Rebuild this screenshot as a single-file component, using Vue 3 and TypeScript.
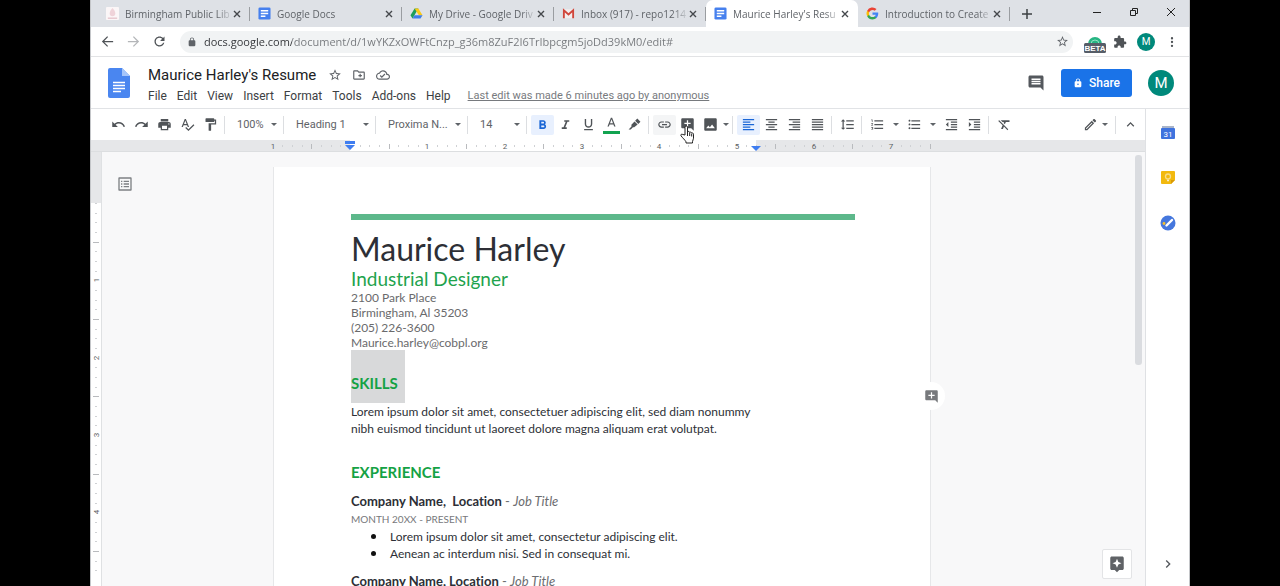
<script setup lang="ts">
import { ref } from 'vue'

interface Tab {
  title: string
  icon: 'library' | 'docs' | 'drive' | 'gmail' | 'google'
  active?: boolean
}

interface Tool {
  name: string
  label: string
  on?: boolean
  hover?: boolean
  caret?: 'tight' | 'wide'
}

interface Tick {
  pos: number
  kind: 'label' | 'half' | 'eighth'
  text: string
}

const tabs: Tab[] = [
  { title: 'Birmingham Public Lib', icon: 'library' },
  { title: 'Google Docs', icon: 'docs' },
  { title: 'My Drive - Google Driv', icon: 'drive' },
  { title: 'Inbox (917) - repo1214', icon: 'gmail' },
  { title: "Maurice Harley's Resu", icon: 'docs', active: true },
  { title: 'Introduction to Create', icon: 'google' },
]

const url = ref('docs.google.com/document/d/1wYKZxOWFtCnzp_g36m8ZuF2I6TrIbpcgm5joDd39kM0/edit#')
const docTitle = ref("Maurice Harley's Resume")
const menus = ['File', 'Edit', 'View', 'Insert', 'Format', 'Tools', 'Add-ons', 'Help']

const selects = [
  { id: 'zoom', label: 'Zoom', value: '100%', size: 'narrow' },
  { id: 'style', label: 'Paragraph style', value: 'Heading 1', size: 'wide' },
  { id: 'font', label: 'Font', value: 'Proxima N...', size: 'wide' },
  { id: 'size', label: 'Font size', value: '14', size: 'narrow' },
]

const historyTools: Tool[] = [
  { name: 'undo', label: 'Undo' },
  { name: 'redo', label: 'Redo' },
  { name: 'print', label: 'Print' },
  { name: 'spell', label: 'Spelling and grammar check' },
  { name: 'paint', label: 'Paint format' },
]

const toolGroups: Tool[][] = [
  [
    { name: 'bold', label: 'Bold', on: true },
    { name: 'italic', label: 'Italic' },
    { name: 'underline', label: 'Underline' },
    { name: 'color', label: 'Text color' },
    { name: 'marker', label: 'Highlight color' },
  ],
  [
    { name: 'link', label: 'Insert link', hover: true },
    { name: 'addComment', label: 'Add comment' },
    { name: 'image', label: 'Insert image', caret: 'tight' },
  ],
  [
    { name: 'left', label: 'Left align', on: true },
    { name: 'center', label: 'Center align' },
    { name: 'right', label: 'Right align' },
    { name: 'justify', label: 'Justify' },
  ],
  [{ name: 'spacing', label: 'Line spacing' }],
  [
    { name: 'numbered', label: 'Numbered list', caret: 'wide' },
    { name: 'bulleted', label: 'Bulleted list', caret: 'wide' },
    { name: 'outdent', label: 'Decrease indent' },
    { name: 'indent', label: 'Increase indent' },
  ],
  [{ name: 'clear', label: 'Clear formatting' }],
]

const icons: Record<string, string> = {
  undo: 'M12.5 8c-2.65 0-5.05.99-6.9 2.6L2 7v9h9l-3.62-3.62c1.39-1.16 3.16-1.88 5.12-1.88 3.54 0 6.55 2.31 7.6 5.5l2.37-.78C21.08 11.03 17.15 8 12.5 8z',
  redo: 'M18.4 10.6C16.55 8.99 14.15 8 11.5 8c-4.65 0-8.58 3.03-9.96 7.22L3.9 16c1.05-3.19 4.05-5.5 7.6-5.5 1.95 0 3.73.72 5.12 1.88L13 16h9V7l-3.6 3.6z',
  print: 'M19 8H5c-1.66 0-3 1.34-3 3v6h4v4h12v-4h4v-6c0-1.66-1.34-3-3-3zm-3 11H8v-5h8v5zm3-7c-.55 0-1-.45-1-1s.45-1 1-1 1 .45 1 1-.45 1-1 1zm-1-9H6v4h12V3z',
  spell: 'M12.45 16h2.09L9.43 3H7.57L2.46 16h2.09l1.12-3h5.64l1.14 3zm-6.02-5L8.5 5.48 10.57 11H6.43zm15.16.59l-8.09 8.09L9.83 16l-1.41 1.41 5.09 5.09L23 13l-1.41-1.41z',
  paint: 'M18 4V3c0-.55-.45-1-1-1H5c-.55 0-1 .45-1 1v4c0 .55.45 1 1 1h12c.55 0 1-.45 1-1V6h1v4H9v11c0 .55.45 1 1 1h2c.55 0 1-.45 1-1v-9h8V4h-3z',
  bold: 'M15.6 11.79c.97-.67 1.65-1.77 1.65-2.79 0-2.26-1.75-4-4-4H7v14h7.04c2.09 0 3.71-1.7 3.71-3.79 0-1.52-.86-2.82-2.15-3.42zM10 7.5h3c.83 0 1.5.67 1.5 1.5s-.67 1.5-1.5 1.5h-3v-3zm3.5 9H10v-3h3.5c.83 0 1.5.67 1.5 1.5s-.67 1.5-1.5 1.5z',
  italic: 'M10 5v2.5h2.4l-3.6 9H6V19h8v-2.5h-2.4l3.6-9H18V5z',
  underline: 'M12 17c3.31 0 6-2.69 6-6V3h-2.2v8c0 2.1-1.7 3.8-3.8 3.8S8.2 13.1 8.2 11V3H6v8c0 3.31 2.69 6 6 6zm-7 2v2h14v-2H5z',
  color: 'M11 1L5.5 15h2.25l1.12-3h6.25l1.12 3h2.25L13 1h-2zm-1.38 9L12 3.67 14.38 10H9.62z',
  marker: 'M16.5 2.5l5 5-3.5 3.5-5-5zM12 7l5 5-5.5 4.5-2-.3L6 20H2.5l4.7-5-.2-2.5z',
  link: 'M3.9 12c0-1.71 1.39-3.1 3.1-3.1h4V7H7c-2.76 0-5 2.24-5 5s2.24 5 5 5h4v-1.9H7c-1.71 0-3.1-1.39-3.1-3.1zM8 13h8v-2H8v2zm9-6h-4v1.9h4c1.71 0 3.1 1.39 3.1 3.1s-1.39 3.1-3.1 3.1h-4V17h4c2.76 0 5-2.24 5-5s-2.24-5-5-5z',
  addComment: 'M22 4c0-1.1-.9-2-2-2H4c-1.1 0-2 .9-2 2v12c0 1.1.9 2 2 2h14l4 4V4zM17 11h-4v4h-2v-4H7V9h4V5h2v4h4v2z',
  image: 'M22 20V4c0-1.1-.9-2-2-2H4c-1.1 0-2 .9-2 2v16c0 1.1.9 2 2 2h16c1.1 0 2-.9 2-2zM8.5 13.5l2.5 3 3.5-4.5 4.5 6H5l3.5-4.5z',
  left: 'M15 15H3v2h12v-2zm0-8H3v2h12V7zM3 13h18v-2H3v2zm0 8h18v-2H3v2zM3 3v2h18V3H3z',
  center: 'M7 15v2h10v-2H7zm-4 6h18v-2H3v2zm0-8h18v-2H3v2zm4-6v2h10V7H7zM3 3v2h18V3H3z',
  right: 'M3 21h18v-2H3v2zm6-4h12v-2H9v2zm-6-4h18v-2H3v2zm6-4h12V7H9v2zM3 3v2h18V3H3z',
  justify: 'M3 21h18v-2H3v2zm0-4h18v-2H3v2zm0-4h18v-2H3v2zm0-4h18V7H3v2zm0-6v2h18V3H3z',
  spacing: 'M6 7h2.5L5 3.5 1.5 7H4v10H1.5L5 20.5 8.5 17H6V7zm4-2v2h12V5H10zm0 14h12v-2H10v2zm0-6h12v-2H10v2z',
  numbered: 'M2 17h2v.5H3v1h1v.5H2v1h3v-4H2v1zm1-9h1V4H2v1h1v3zm-1 3h1.8L2 13.1v.9h3v-1H3.2L5 10.9V10H2v1zm5-6v2h14V5H7zm0 14h14v-2H7v2zm0-6h14v-2H7v2z',
  bulleted: 'M4 10.5c-.83 0-1.5.67-1.5 1.5s.67 1.5 1.5 1.5 1.5-.67 1.5-1.5-.67-1.5-1.5-1.5zm0-6c-.83 0-1.5.67-1.5 1.5S3.17 7.5 4 7.5 5.5 6.83 5.5 6 4.83 4.5 4 4.5zm0 12c-.83 0-1.5.68-1.5 1.5s.68 1.5 1.5 1.5 1.5-.68 1.5-1.5-.67-1.5-1.5-1.5zM7 19h14v-2H7v2zm0-6h14v-2H7v2zm0-8v2h14V5H7z',
  outdent: 'M11 17h10v-2H11v2zm-8-5l4 4V8l-4 4zm0 9h18v-2H3v2zM3 3v2h18V3H3zm8 6h10V7H11v2zm0 4h10v-2H11v2z',
  indent: 'M3 21h18v-2H3v2zM3 8v8l4-4-4-4zm8 9h10v-2H11v2zM3 3v2h18V3H3zm8 6h10V7H11v2zm0 4h10v-2H11v2z',
  clear: 'M3.27 5L2 6.27l6.97 6.97L6.5 19h3l1.57-3.66L16.73 21 18 19.73 3.55 5.27 3.27 5zM6 5v.18L8.82 8h2.4l-.72 1.68 2.1 2.1L14.21 8H20V5H6z',
  edit: 'M14.06 9.02l.92.92L5.92 19H5v-.92l9.06-9.06M17.66 3c-.25 0-.51.1-.7.29l-1.83 1.83 3.75 3.75 1.83-1.83c.39-.39.39-1.02 0-1.41l-2.34-2.34c-.2-.2-.45-.29-.71-.29zm-3.6 3.19L3 17.25V21h3.75L17.81 9.94l-3.75-3.75z',
  up: 'M12 8l-6 6 1.41 1.41L12 10.83l4.59 4.58L18 14z',
  next: 'M10 6L8.59 7.41 13.17 12l-4.58 4.59L10 18l6-6z',
  comment: 'M22 4c0-1.1-.9-2-2-2H4c-1.1 0-2 .9-2 2v12c0 1.1.9 2 2 2h14l4 4V4zM18 14H6v-2h12v2zm0-3H6V9h12v2zm0-3H6V6h12v2z',
  lock: 'M18 8h-1V6c0-2.76-2.24-5-5-5S7 3.24 7 6v2H6c-1.1 0-2 .9-2 2v10c0 1.1.9 2 2 2h12c1.1 0 2-.9 2-2V10c0-1.1-.9-2-2-2zm-6 9c-1.1 0-2-.9-2-2s.9-2 2-2 2 .9 2 2-.9 2-2 2zm3.1-9H8.9V6c0-1.71 1.39-3.1 3.1-3.1 1.71 0 3.1 1.39 3.1 3.1v2z',
  padlock: 'M18 8h-1V6c0-2.76-2.24-5-5-5S7 3.24 7 6v2H6c-1.1 0-2 .9-2 2v10c0 1.1.9 2 2 2h12c1.1 0 2-.9 2-2V10c0-1.1-.9-2-2-2zM15.1 8H8.9V6c0-1.71 1.39-3.1 3.1-3.1 1.71 0 3.1 1.39 3.1 3.1v2z',
  star: 'M22 9.24l-7.19-.62L12 2 9.19 8.63 2 9.24l5.46 4.73L5.82 21 12 17.27 18.18 21l-1.63-7.03L22 9.24zM12 15.4l-3.76 2.27 1-4.28-3.32-2.88 4.38-.38L12 6.1l1.71 4.04 4.38.38-3.32 2.88 1 4.28L12 15.4z',
  cloud: 'M19.35 10.04C18.67 6.59 15.64 4 12 4 9.11 4 6.6 5.64 5.35 8.04 2.34 8.36 0 10.91 0 14c0 3.31 2.69 6 6 6h13c2.76 0 5-2.24 5-5 0-2.64-2.05-4.78-4.65-4.96zM19 18H6c-2.21 0-4-1.79-4-4 0-2.05 1.53-3.76 3.56-3.97l1.07-.11.5-.95C8.08 7.14 9.94 6 12 6c2.62 0 4.88 1.86 5.39 4.43l.3 1.5 1.53.11c1.56.1 2.78 1.41 2.78 2.96 0 1.65-1.35 3-3 3zm-9-3.82l-2.09-2.09L6.5 13.5 10 17l6.01-6.01-1.41-1.41z',
  folder: 'M20 6h-8l-2-2H4c-1.11 0-2 .89-2 2v12c0 1.11.89 2 2 2h16c1.11 0 2-.89 2-2V8c0-1.11-.89-2-2-2zm0 12H4V6h5.17l2 2H20v10zm-9-4h2v2h2v-2h2v-2h-2v-2h-2v2h-2z',
  back: 'M21 11H6.83l6.09-6.09L11.5 3.5 3 12l8.5 8.5 1.41-1.41L6.83 13H21v-2z',
  forward: 'M12.5 3.5l-1.41 1.41L17.17 11H3v2h14.17l-6.08 6.09 1.41 1.41L21 12z',
  reload: 'M17.65 6.35C16.2 4.9 14.21 4 12 4c-4.42 0-8 3.58-8 8s3.58 8 8 8c3.73 0 6.84-2.55 7.73-6h-2.08c-.82 2.33-3.04 4-5.65 4-3.31 0-6-2.69-6-6s2.69-6 6-6c1.66 0 3.14.69 4.22 1.78L13 11h7V4l-2.35 2.35z',
  puzzle: 'M20.5 11H19V7c0-1.1-.9-2-2-2h-4V3.5C13 2.12 11.88 1 10.5 1S8 2.12 8 3.5V5H4c-1.1 0-2 .9-2 2v3.8h1.5c1.49 0 2.7 1.21 2.7 2.7s-1.21 2.7-2.7 2.7H2V20c0 1.1.9 2 2 2h3.8v-1.5c0-1.49 1.21-2.7 2.7-2.7 1.49 0 2.7 1.21 2.7 2.7V22H17c1.1 0 2-.9 2-2v-4h1.5c1.38 0 2.5-1.12 2.5-2.5S21.88 11 20.5 11z',
  more: 'M12 7.5a2 2 0 100-4 2 2 0 000 4zm0 2.5a2 2 0 100 4 2 2 0 000-4zm0 6.5a2 2 0 100 4 2 2 0 000-4z',
  outline: 'M20.5 2h-17C2.7 2 2 2.7 2 3.5v17c0 .8.7 1.5 1.5 1.5h17c.8 0 1.5-.7 1.5-1.5v-17c0-.8-.7-1.5-1.5-1.5zM20 20H4V4h16v16zM10 7h8v2h-8zm0 4h8v2h-8zm0 4h8v2h-8zM6 7h2v2H6zm0 4h2v2H6zm0 4h2v2H6z',
  explore: 'M19 2H5c-1.1 0-2 .9-2 2v14c0 1.1.9 2 2 2h4l3 3 3-3h4c1.1 0 2-.9 2-2V4c0-1.1-.9-2-2-2zM13.8 12.8L12 17l-1.8-4.2L6 11l4.2-1.8L12 5l1.8 4.2L18 11z',
}

const INCH = 77.3

function makeTicks(origin: number, from: number, to: number): Tick[] {
  const ticks: Tick[] = []
  for (let i = from * 8; i <= to * 8; i++) {
    const whole = i % 8 === 0
    ticks.push({
      pos: Math.round(origin + (i * INCH) / 8),
      kind: whole ? 'label' : i % 4 === 0 ? 'half' : 'eighth',
      text: whole && i !== 0 ? String(Math.abs(i / 8)) : '',
    })
  }
  return ticks
}

const acrossTicks = makeTicks(259, -1, 7.5)
const downTicks = makeTicks(51, 0, 4.75)

const jobs = [
  {
    company: 'Company Name,\u00a0 Location',
    role: 'Job Title',
    dates: 'MONTH 20XX - PRESENT',
    points: ['Lorem ipsum dolor sit amet, consectetur adipiscing elit.', 'Aenean ac interdum nisi. Sed in consequat mi.'],
  },
  { company: 'Company Name, Location', role: 'Job Title', dates: '', points: [] },
]
</script>

<template>
  <div class="window">
    <header class="tabstrip">
      <div v-for="tab in tabs" :key="tab.title" class="tab" :class="{ active: tab.active }">
        <svg v-if="tab.icon === 'library'" class="favicon" viewBox="0 0 14 14">
          <rect width="14" height="14" rx="1" fill="#fbf6f7" />
          <path d="M7 1c2 2 3 4 3 6s-1 3-3 3-3-1-3-3 1-4 3-6z" fill="#efd3d9" />
          <path d="M2 12h10" stroke="#dcaeb8" />
        </svg>
        <svg v-else-if="tab.icon === 'docs'" class="favicon" viewBox="0 0 14 14">
          <rect x=".5" y=".5" width="13" height="13" rx="1.5" fill="#4680ee" />
          <path d="M3 4h8M3 7h8M3 10h5" stroke="#fff" stroke-width="1.5" />
        </svg>
        <svg v-else-if="tab.icon === 'drive'" class="favicon" viewBox="0 0 14 14">
          <path d="M5 1.5h4L5 8.5 2.7 12.5.5 9z" fill="#1e9e5a" />
          <path d="M5 1.5h4L13.5 9h-4z" fill="#fbc815" />
          <path d="M4.9 9h8.6l-2.2 3.5H2.7z" fill="#3f7ee8" />
        </svg>
        <svg v-else-if="tab.icon === 'gmail'" class="favicon" viewBox="0 0 14 14">
          <path d="M1 2.5h12V12H1z" fill="#f3eeee" />
          <path d="M2 12V3.500l5 4.500 5-4.500V12" fill="none" stroke="#d0463b" stroke-width="2" />
        </svg>
        <svg v-else class="favicon" viewBox="0 0 24 24">
          <path d="M22.6 12.2c0-.8-.1-1.5-.2-2.2H12v4.3h5.9a5 5 0 01-2.2 3.3v2.8h3.6c2.1-2 3.3-4.8 3.3-8.2z" fill="#4285f4" />
          <path d="M12 23c3 0 5.5-1 7.3-2.7l-3.6-2.8c-1 .7-2.2 1.1-3.7 1.1-2.9 0-5.3-1.9-6.2-4.5H2.2V17A11 11 0 0012 23z" fill="#34a853" />
          <path d="M5.8 14.1a6.6 6.6 0 010-4.2V7H2.2a11 11 0 000 10z" fill="#fbbc05" />
          <path d="M12 5.4c1.6 0 3.1.6 4.2 1.6l3.2-3.2A11 11 0 002.2 7l3.6 2.9C6.7 7.3 9.1 5.4 12 5.4z" fill="#ea4335" />
        </svg>
        <a href="#" class="tab-title">{{ tab.title }}</a>
        <button class="close" :aria-label="`Close ${tab.title}`">
          <svg viewBox="0 0 8 8"><path d="M1 1l6 6M7 1L1 7" /></svg>
        </button>
      </div>
      <button class="new-tab" aria-label="New tab">
        <svg viewBox="0 0 10 10"><path d="M5 0v10M0 5h10" /></svg>
      </button>
      <div class="window-buttons">
        <button aria-label="Minimize"><svg viewBox="0 0 10 10"><path d="M1 5.5h8" /></svg></button>
        <button aria-label="Restore"><svg viewBox="0 0 10 10"><path d="M1.5 3.5h5v5h-5zM3.5 3V1.5h5v5H7" /></svg></button>
        <button aria-label="Close window"><svg viewBox="0 0 10 10"><path d="M1 1l8 8M9 1L1 9" /></svg></button>
      </div>
    </header>

    <div class="navbar">
      <button class="nav" aria-label="Back"><svg viewBox="0 0 24 24"><path :d="icons.back" /></svg></button>
      <button class="nav off" aria-label="Forward" disabled><svg viewBox="0 0 24 24"><path :d="icons.forward" /></svg></button>
      <button class="nav" aria-label="Reload"><svg viewBox="0 0 24 24"><path :d="icons.reload" /></svg></button>
      <div class="omnibox">
        <svg class="secure" viewBox="0 0 24 24"><path :d="icons.padlock" /></svg>
        <input v-model="url" type="text" aria-label="Address" />
        <button class="bookmark" aria-label="Bookmark this tab"><svg viewBox="0 0 24 24"><path :d="icons.star" /></svg></button>
      </div>
      <div class="extensions">
        <button class="beta" aria-label="Beta extension">
          <svg viewBox="0 0 22 18">
            <path d="M4 9a7 7 0 0114 0z" fill="#26b583" />
            <path d="M7 9a4 4 0 018 0" fill="none" stroke="#8fe0c2" />
            <rect x="0" y="8" width="22" height="10" rx="1.5" fill="#565d68" />
            <text x="11" y="16" text-anchor="middle">BETA</text>
          </svg>
        </button>
        <button class="nav" aria-label="Extensions"><svg class="puzzle" viewBox="0 0 24 24"><path :d="icons.puzzle" /></svg></button>
        <button class="avatar small" aria-label="Profile">M</button>
        <button class="nav" aria-label="Browser menu"><svg class="puzzle" viewBox="0 0 24 24"><path :d="icons.more" /></svg></button>
      </div>
    </div>

    <div class="doc-header">
      <a href="#" class="logo" aria-label="Docs home">
        <svg viewBox="0 0 22 30">
          <path d="M2 0h12l8 8v20a2 2 0 01-2 2H2a2 2 0 01-2-2V2a2 2 0 012-2z" fill="#4a86f0" />
          <path d="M14 0l8 8h-8z" fill="#a5c5fa" />
          <path d="M5 14.5h12M5 17.5h12M5 20.5h12M5 23.5h8" stroke="#fff" stroke-width="1.5" />
        </svg>
      </a>
      <div class="title-block">
        <div class="title-row">
          <input v-model="docTitle" type="text" aria-label="Document title" />
          <button aria-label="Star"><svg viewBox="0 0 24 24"><path :d="icons.star" /></svg></button>
          <button aria-label="Move"><svg viewBox="0 0 24 24"><path :d="icons.folder" /></svg></button>
          <button aria-label="Saved to Drive"><svg viewBox="0 0 24 24"><path :d="icons.cloud" /></svg></button>
        </div>
        <nav class="menu-row">
          <button v-for="menu in menus" :key="menu">{{ menu }}</button>
          <a href="#">Last edit was made 6 minutes ago by anonymous</a>
        </nav>
      </div>
      <button class="history" aria-label="Open comment history"><svg viewBox="0 0 24 24"><path :d="icons.comment" fill-rule="evenodd" /></svg></button>
      <button class="share">
        <svg viewBox="0 0 24 24"><path :d="icons.lock" /></svg>
        Share
      </button>
      <button class="avatar" aria-label="Account">M</button>
    </div>

    <div class="workspace">
      <main class="editor">
        <div class="toolbar">
          <div class="group first">
            <button v-for="tool in historyTools" :key="tool.name" class="tool" :aria-label="tool.label">
              <svg viewBox="0 0 24 24"><path :d="icons[tool.name]" /></svg>
            </button>
          </div>
          <div v-for="s in selects" :key="s.id" class="group pick" :class="s.size">
            <select :id="s.id" :aria-label="s.label">
              <option>{{ s.value }}</option>
            </select>
            <svg class="arrow" viewBox="0 0 6 3"><path d="M0 0h6L3 3z" /></svg>
          </div>
          <div v-for="(group, i) in toolGroups" :key="i" class="group">
            <template v-for="tool in group" :key="tool.name">
              <button class="tool" :class="{ on: tool.on, hover: tool.hover }" :aria-label="tool.label">
                <svg viewBox="0 0 24 24">
                  <path :d="icons[tool.name]" fill-rule="evenodd" />
                </svg>
                <span v-if="tool.name === 'color'" class="swatch"></span>
                <svg v-if="tool.name === 'addComment'" class="pointer" viewBox="0 0 14 19">
                  <path d="M5 10V2.2C5 .5 7.5.5 7.5 2.2V7c.5-1 2.200-.7 2.200.6.600-.9 2-.5 2 .7.700-.6 1.800-.2 1.800.9v4c0 1.300-1 2.200-1 3.500V18H6v-1.200C5 15 2.500 12.800 1 10.800c-.7-1.200.7-2.200 1.800-1.300z" />
                  <path d="M7.500 7v4M9.700 8v3M11.700 9v2.500" />
                </svg>
              </button>
              <button v-if="tool.caret" class="caret" :class="tool.caret" :aria-label="`${tool.label} options`">
                <svg class="arrow" viewBox="0 0 6 3"><path d="M0 0h6L3 3z" /></svg>
              </button>
            </template>
          </div>
          <div class="group mode">
            <button class="tool" aria-label="Editing mode"><svg viewBox="0 0 24 24"><path :d="icons.edit" /></svg></button>
            <svg class="arrow" viewBox="0 0 6 3"><path d="M0 0h6L3 3z" /></svg>
          </div>
          <button class="tool collapse" aria-label="Hide the menus"><svg viewBox="0 0 24 24"><path :d="icons.up" /></svg></button>
        </div>

        <svg class="ruler across" aria-hidden="true">
          <rect x="259" width="406" height="11" fill="#fff" />
          <g v-for="(t, i) in acrossTicks" :key="i">
            <text v-if="t.text" :x="t.pos" y="9" text-anchor="middle">{{ t.text }}</text>
            <path v-else :d="t.kind === 'half' ? `M${t.pos + 0.5} 4v5` : `M${t.pos + 0.5} 5v2`" :class="t.kind" />
          </g>
          <path d="M254 1h10v3h-10zM254 5h10l-5 5z" class="stop" />
          <path d="M660 6h10l-5 5z" class="stop" />
        </svg>

        <div class="stage">
          <svg class="ruler down" aria-hidden="true">
            <rect y="51" width="11" height="100%" fill="#fff" />
            <g v-for="(t, i) in downTicks" :key="i">
              <text v-if="t.text" :transform="`translate(8 ${t.pos}) rotate(-90)`" text-anchor="middle">{{ t.text }}</text>
              <path v-else :d="t.kind === 'half' ? `M2 ${t.pos + 0.5}h6` : `M4 ${t.pos + 0.5}h2`" :class="t.kind" />
            </g>
          </svg>

          <div class="canvas">
            <div class="outline-rail">
              <button aria-label="Show document outline"><svg viewBox="0 0 24 24"><path :d="icons.outline" fill-rule="evenodd" /></svg></button>
            </div>
            <article class="page">
              <div class="rule"></div>
              <h1>Maurice Harley</h1>
              <p class="subtitle">Industrial Designer</p>
              <address>
                2100 Park Place<br />
                Birmingham, Al 35203<br />
                (205) 226-3600<br />
                Maurice.harley@cobpl.org
              </address>
              <h2 class="selected">SKILLS</h2>
              <p class="body">
                Lorem ipsum dolor sit amet, consectetuer adipiscing elit, sed diam nonummy<br />
                nibh euismod tincidunt ut laoreet dolore magna aliquam erat volutpat.
              </p>
              <h2 class="section">EXPERIENCE</h2>
              <section v-for="job in jobs" :key="job.company" class="job">
                <h3>{{ job.company }} <span>- <i>{{ job.role }}</i></span></h3>
                <p v-if="job.dates" class="dates">{{ job.dates }}</p>
                <ul v-if="job.points.length">
                  <li v-for="point in job.points" :key="point">{{ point }}</li>
                </ul>
              </section>
              <button class="comment-bubble" aria-label="Add comment"><svg viewBox="0 0 24 24"><path :d="icons.addComment" fill-rule="evenodd" /></svg></button>
            </article>
            <div class="scrollbar"><div class="thumb"></div></div>
            <button class="explore" aria-label="Explore"><svg viewBox="0 0 24 24"><path :d="icons.explore" fill-rule="evenodd" /></svg></button>
          </div>
        </div>
      </main>

      <aside class="side-panel">
        <button aria-label="Calendar">
          <svg viewBox="0 0 16 16">
            <path d="M2 1h12v3H2z" fill="#a9b4c9" />
            <rect x="1" y="3" width="14" height="11" rx="1" fill="#3f73de" />
            <text x="8" y="12" text-anchor="middle">31</text>
          </svg>
        </button>
        <button aria-label="Keep">
          <svg viewBox="0 0 16 16">
            <path d="M2 1h12a1 1 0 011 1v8l-4 4H2a1 1 0 01-1-1V2a1 1 0 011-1z" fill="#f2b90f" />
            <path d="M15 10l-4 4v-4z" fill="#d99a06" />
            <circle cx="8" cy="6.5" r="2.5" fill="none" stroke="#f7dc8a" stroke-width="1.3" />
            <path d="M7 10.5h2" stroke="#fbeec4" stroke-width="1.5" />
          </svg>
        </button>
        <button aria-label="Tasks">
          <svg viewBox="0 0 16 16">
            <circle cx="8" cy="8" r="7.5" fill="#4577dd" />
            <path d="M6.5 10.5L12 5" stroke="#fff" stroke-width="2.4" stroke-linecap="round" />
            <circle cx="4" cy="8.5" r="1.4" fill="#f5c02b" />
          </svg>
        </button>
        <button class="toggle" aria-label="Hide side panel"><svg viewBox="0 0 24 24"><path :d="icons.next" /></svg></button>
      </aside>
    </div>
  </div>
</template>

<style>
body {
  margin: 0;
  background: #000;
}
</style>

<style scoped>
.window,
.window * {
  box-sizing: border-box;
}

.window {
  display: flex;
  flex-direction: column;
  height: 100vh;
  margin: 0 90px;
  border: solid #c4c6c9;
  border-width: 0 1px;
  background: #fff;
  color: #3c4043;
  font-family: Roboto, "Liberation Sans", sans-serif;
  font-size: 12px;
  overflow: hidden;
}

button,
input,
select {
  margin: 0;
  padding: 0;
  border: 0;
  background: none;
  color: inherit;
  font: inherit;
}

button {
  display: flex;
  align-items: center;
  justify-content: center;
  flex: none;
}

svg {
  display: block;
  flex: none;
}

/* browser tabs */
.tabstrip {
  display: flex;
  flex: none;
  height: 27px;
  padding-left: 7px;
  background: #dee1e6;
  font-family: "Open Sans", "Noto Sans", sans-serif;
  font-size: 10px;
}

.tab {
  display: flex;
  align-items: center;
  flex: 0 1 152px;
  min-width: 0;
  padding: 0 9px 0 8px;
  background: linear-gradient(#9a9da1, #9a9da1) right center / 1px 14px no-repeat;
}

.tab.active {
  border-radius: 7px 7px 0 0;
  background: #fff;
}

.favicon {
  width: 13px;
  height: 13px;
  margin-right: 6px;
}

.tab-title {
  flex: 1;
  overflow: hidden;
  color: #5f6368;
  text-decoration: none;
  white-space: nowrap;
  mask-image: linear-gradient(to right, #000 85%, transparent);
}

.close {
  width: 8px;
  height: 14px;
}

.close svg {
  width: 8px;
}

.close path {
  stroke: #45484c;
  stroke-width: 1.4;
}

.new-tab {
  width: 34px;
}

.new-tab svg {
  width: 10px;
}

.new-tab path {
  stroke: #3c4043;
  stroke-width: 1.5;
}

.window-buttons {
  display: flex;
  flex: none;
  margin-left: auto;
  padding-bottom: 4px;
}

.window-buttons button {
  width: 37px;
}

.window-buttons svg {
  width: 10px;
}

.window-buttons path {
  fill: none;
  stroke: #222;
}

/* address row */
.navbar {
  display: flex;
  align-items: center;
  flex: none;
  height: 30px;
  padding: 0 4px 0 3px;
  border-bottom: 1px solid #e2e3e5;
}

.nav {
  width: 26px;
  height: 24px;
  fill: #4f5357;
}

.nav svg {
  width: 15px;
}

.nav .puzzle {
  width: 14px;
}

.nav.off {
  fill: #b4b6b9;
}

.omnibox {
  display: flex;
  align-items: center;
  flex: 1;
  height: 22px;
  margin: 0 10px 0 8px;
  padding: 0 4px 0 7px;
  border-radius: 11px;
  background: #f1f3f4;
}

.secure {
  width: 10px;
  margin-right: 7px;
  fill: #5f6368;
}

.omnibox input {
  flex: 1;
  min-width: 0;
  background: linear-gradient(to right, #303236 88px, #74777b 88px);
  background-clip: text;
  color: transparent;
  font-family: "Open Sans", "Noto Sans", sans-serif;
  font-size: 11px;
}

.bookmark svg {
  width: 13px;
  fill: #5f6368;
}

.extensions {
  display: flex;
  align-items: center;
  flex: none;
}

.beta {
  width: 24px;
  margin-top: 4px;
}

.beta svg {
  width: 22px;
}

.beta text {
  fill: #fff;
  font: bold 8px "Liberation Sans", sans-serif;
}

.avatar {
  width: 26px;
  height: 26px;
  border-radius: 50%;
  background: #00897b;
  color: #fff;
  font-size: 15px;
}

.avatar.small {
  width: 18px;
  height: 18px;
  margin: 0 4px;
  font-size: 10px;
}

/* document header */
.doc-header {
  display: flex;
  align-items: center;
  flex: none;
  height: 52px;
  padding: 0 15px 0 17px;
  border-bottom: 1px solid #e1e3e6;
}

.logo svg {
  width: 22px;
}

.title-block {
  flex: 1;
  min-width: 0;
  margin-left: 18px;
  padding-top: 4px;
}

.title-row {
  display: flex;
  align-items: center;
  height: 22px;
  gap: 10px;
}

.title-row input {
  width: 170px;
  height: 20px;
  color: #202124;
  font-size: 15px;
}

.title-row svg {
  width: 14px;
  fill: #5f6368;
}

.menu-row {
  display: flex;
  align-items: center;
  height: 20px;
  gap: 10px;
  white-space: nowrap;
}

.menu-row a {
  margin-left: 7px;
  color: #777a7e;
  font-size: 11px;
}

.history svg {
  width: 18px;
  fill: #54585d;
}

.share {
  width: 71px;
  height: 28px;
  margin: 0 16px;
  gap: 6px;
  border-radius: 3px;
  background: #1a73e8;
  color: #fff;
  font-size: 12px;
  font-weight: 500;
}

.share svg {
  width: 10px;
  fill: #fff;
}

/* editor */
.workspace {
  display: flex;
  flex: 1;
  min-height: 0;
}

.editor {
  display: flex;
  flex: 1;
  flex-direction: column;
  min-width: 0;
}

.toolbar {
  display: flex;
  align-items: center;
  flex: none;
  height: 31px;
  padding: 0 3px 0 16px;
}

.group {
  display: flex;
  align-items: center;
  flex: none;
  height: 18px;
  padding: 0 2px 0 4px;
  border-right: 1px solid #dcdee1;
}

.group.first {
  padding-left: 0;
}

.group:nth-last-child(3) {
  border-right-color: transparent;
}

.group.pick {
  padding: 0 6px 0 12px;
  color: #5f6368;
  font-size: 11px;
}

.group.narrow {
  width: 59px;
}

.group.wide {
  width: 92px;
}

.pick select {
  flex: 1;
  min-width: 0;
  appearance: none;
}

.tool {
  position: relative;
  width: 23px;
  height: 20px;
  border-radius: 2px;
  fill: #505458;
}

.tool svg {
  width: 15px;
}

.tool.on {
  background: #e8f0fe;
  fill: #1a66d6;
}

.tool.hover {
  background: #f4f5f6;
}

.swatch {
  position: absolute;
  right: 3px;
  bottom: 1px;
  left: 3px;
  height: 3px;
  background: #12a350;
}

.tool .pointer {
  position: absolute;
  left: 4px;
  top: 10px;
  width: 14px;
  fill: #fff;
  stroke: #222;
}

.arrow {
  width: 6px;
  fill: #5f6368;
}

.caret.tight {
  width: 8px;
}

.caret.wide {
  width: 14px;
}

.group.mode {
  margin-left: auto;
  padding-right: 7px;
}

.collapse {
  margin-left: 3px;
}

.ruler {
  background: #e6e7e9;
}

.ruler text {
  fill: #5b5e62;
  font-size: 8px;
}

.ruler path {
  stroke: #cfd1d4;
}

.ruler .half {
  stroke: #b9bbbe;
}

.ruler .stop {
  fill: #3f7df0;
  stroke: none;
}

.across {
  width: 100%;
  height: 12px;
  border-bottom: 1px solid #dcdee0;
}

.stage {
  display: flex;
  flex: 1;
  min-height: 0;
}

.down {
  width: 11px;
  height: 100%;
  border-right: 1px solid #dfe1e3;
}

.canvas {
  position: relative;
  display: flex;
  flex: 1;
  min-width: 0;
  background: #f8f8f9;
}

.outline-rail {
  flex: 0 0 171px;
  padding: 24px 0 0 15px;
}

.outline-rail svg {
  width: 16px;
  fill: #7d8084;
}

.page {
  position: relative;
  flex: 0 1 658px;
  align-self: flex-start;
  min-height: 850px;
  margin-top: 15px;
  padding: 47px 75px 0 77px;
  border: solid #e6e7e9;
  border-width: 0 1px;
  background: #fff;
  color: #2d2f36;
  font-family: Lato, "Open Sans", sans-serif;
  font-size: 12px;
  font-variant-ligatures: none;
}

.page h1,
.page h2,
.page h3,
.page p,
.page ul {
  margin: 0;
  padding: 0;
}

.rule {
  height: 6px;
  background: #5db88b;
}

.page h1 {
  margin-top: 10px;
  font-size: 32px;
  font-weight: 400;
  line-height: 38px;
}

.subtitle {
  color: #1fa34d;
  font-size: 19px;
  line-height: 22px;
}

address {
  color: #6a6a6c;
  font-style: normal;
  line-height: 15px;
}

.page h2 {
  color: #14a244;
  font-size: 15px;
  line-height: 22px;
}

.page .selected {
  width: fit-content;
  padding: 22px 7px 9px 0;
  background: #d8d9da;
}

.body {
  line-height: 17px;
  white-space: nowrap;
}

.page .section {
  margin: 24px 0 9px;
}

.job {
  margin-bottom: 10px;
}

.page h3 {
  font-size: 13px;
  line-height: 18px;
}

.page h3 span {
  color: #6c6d70;
  font-weight: 400;
}

.dates {
  color: #77787b;
  font-size: 10px;
  line-height: 18px;
}

.page ul {
  padding-left: 39px;
  line-height: 17px;
  list-style: none;
}

li::before {
  content: "";
  display: inline-block;
  width: 5px;
  height: 5px;
  margin: 0 14px 2px -19px;
  border-radius: 50%;
  background: #111;
}

.comment-bubble {
  position: absolute;
  top: 215px;
  right: -15px;
  width: 28px;
  height: 28px;
  border-radius: 50%;
  background: #fff;
}

.comment-bubble svg {
  width: 15px;
  fill: #77797c;
}

.scrollbar {
  width: 8px;
  margin: 0 2px 0 auto;
  padding: 3px 0;
}

.thumb {
  width: 7px;
  height: 49%;
  border-radius: 3px;
  background: #dadce0;
}

.explore {
  position: absolute;
  right: 13px;
  bottom: 7px;
  width: 30px;
  height: 30px;
  border: 1px solid #e3e4e6;
  border-radius: 2px;
  background: #fff;
}

.explore svg {
  width: 18px;
  fill: #5f6266;
}

/* side panel */
.side-panel {
  display: flex;
  flex: 0 0 44px;
  flex-direction: column;
  align-items: center;
  gap: 29px;
  padding: 16px 0 14px;
  border-left: 1px solid #dfe1e4;
}

.side-panel svg {
  width: 16px;
}

.side-panel text {
  fill: #fff;
  font-size: 8px;
}

.toggle {
  margin-top: auto;
  fill: #54585d;
}
</style>
